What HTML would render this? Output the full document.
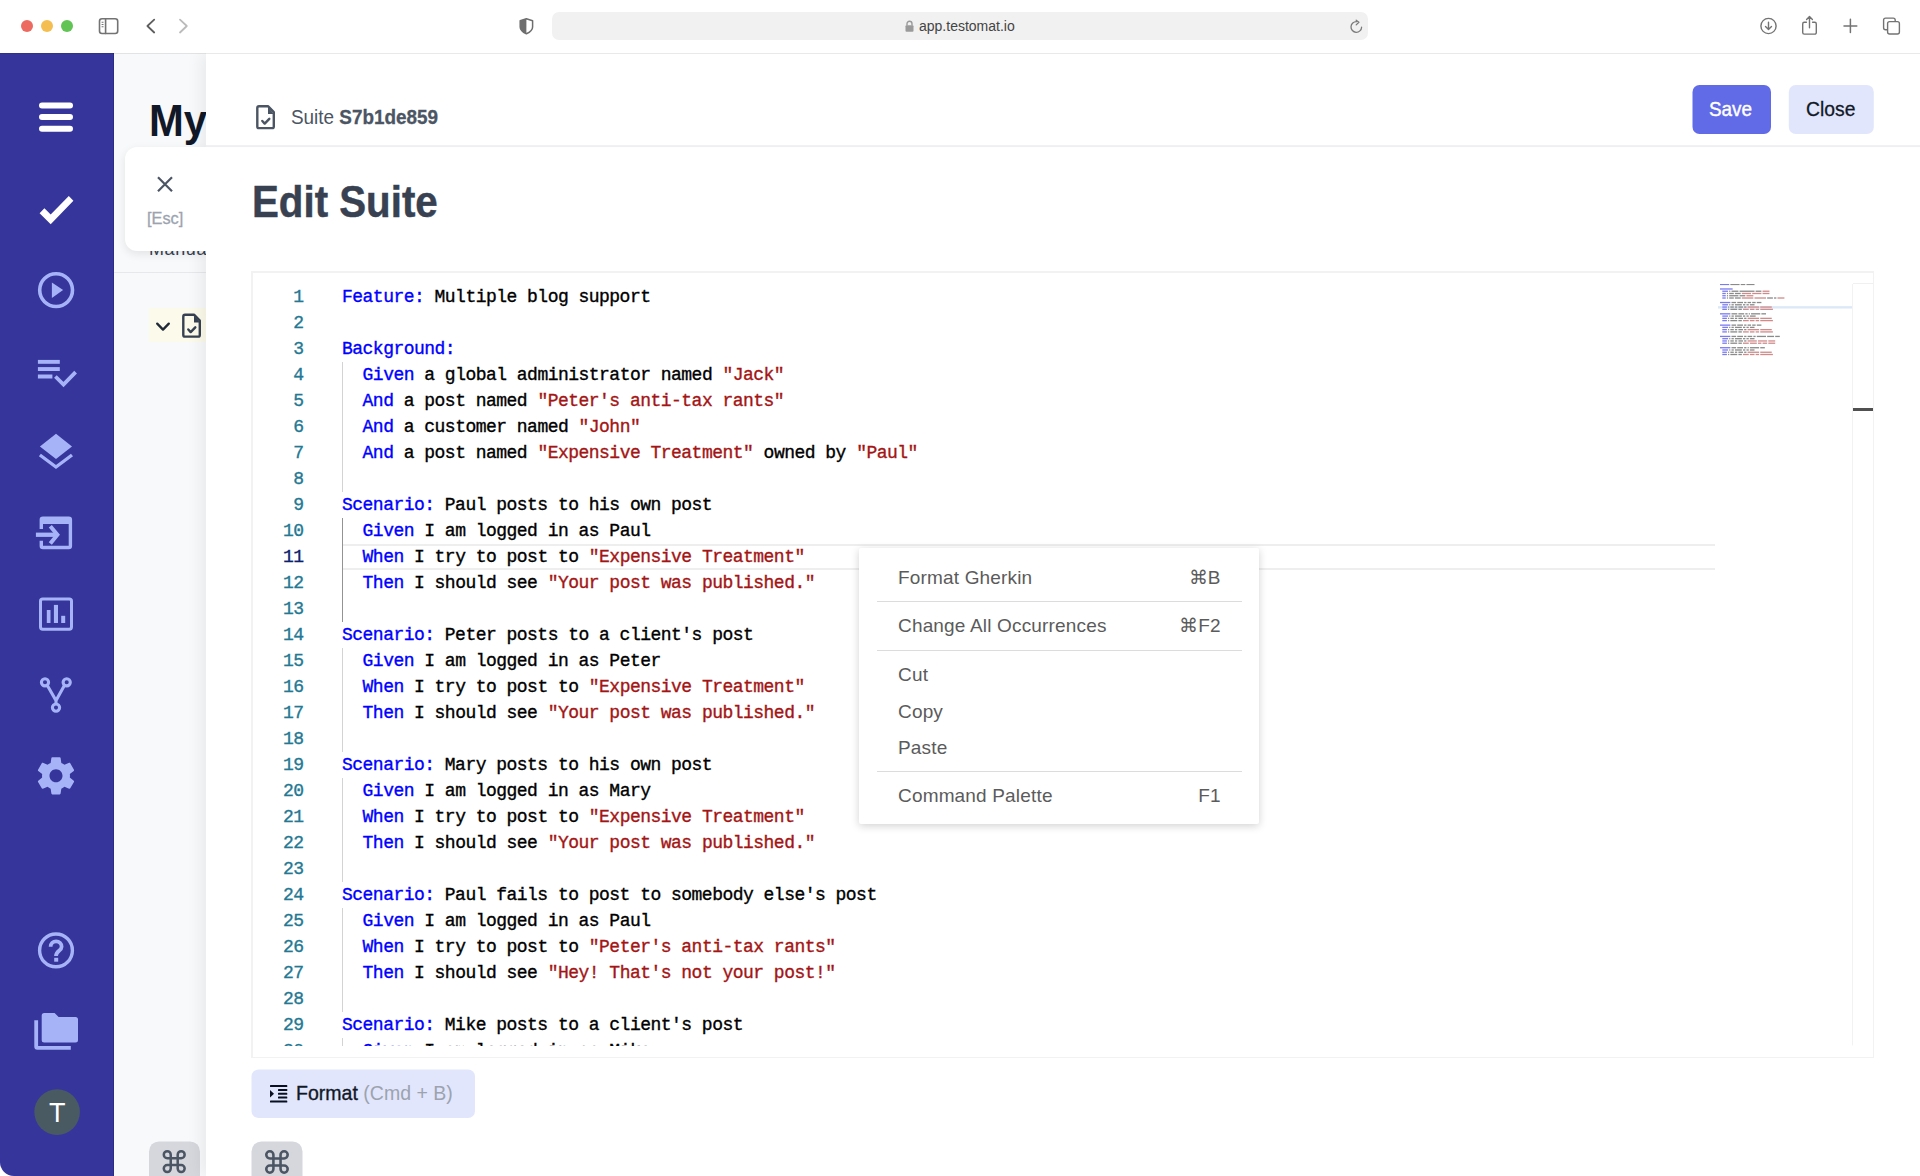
<!DOCTYPE html>
<html><head><meta charset="utf-8">
<style>
*{box-sizing:border-box;margin:0;padding:0}
html,body{width:1920px;height:1176px;overflow:hidden;background:#fff;font-family:"Liberation Sans",sans-serif}
.a{position:absolute}
svg{position:absolute;overflow:visible}
.t{position:absolute;white-space:pre;transform-origin:0 0}
/* browser toolbar */
#tb{position:absolute;z-index:5;left:0;top:0;width:1920px;height:54px;background:#fff;background-clip:padding-box;border-bottom:1px solid rgba(0,0,0,0.085)}
.dot{position:absolute;top:20px;width:12px;height:12px;border-radius:50%}
#url{position:absolute;left:552px;top:12px;width:816px;height:28px;background:#f1f1f1;border-radius:7px}
/* sidebar */
#sb{position:absolute;left:0;top:53px;width:114px;height:1123px;background:#35359b;border-bottom-left-radius:14px;box-shadow:inset -1px 0 rgba(0,0,40,0.18)}
#p2{position:absolute;left:114px;top:53px;width:92px;height:1123px;background:#f8f9fb;overflow:hidden}
#modal{position:absolute;left:206px;top:53px;width:1714px;height:1123px;background:#fff;box-shadow:-4px 0 16px rgba(0,0,0,0.07)}
.cl{position:absolute;left:342px;height:26px;line-height:26px;font-family:"Liberation Mono",monospace;font-size:18px;letter-spacing:-0.52px;color:#000;white-space:pre;-webkit-text-stroke:0.35px}
.ln{position:absolute;left:263px;width:40.5px;text-align:right;height:26px;line-height:26px;font-family:"Liberation Mono",monospace;font-size:18px;letter-spacing:-0.52px;color:#237893;white-space:pre;-webkit-text-stroke:0.35px}
.ln.act{color:#0b216f}
.k{color:#0000ff}.s{color:#a31515}
.mi{position:absolute;left:899px;font-size:19px;line-height:19px;color:#5b5b5b;white-space:pre;letter-spacing:0.17px}
.ms{position:absolute;right:38.5px;font-size:19px;line-height:19px;color:#5b5b5b;white-space:pre}
.sep{position:absolute;left:18px;width:365px;height:1px;background:#dcdcdc}
</style></head><body>

<div id="tb">
  <div class="dot" style="left:21px;background:#ec6a5f"></div>
  <div class="dot" style="left:41px;background:#f4bf50"></div>
  <div class="dot" style="left:61px;background:#61c454"></div>
  <!-- sidebar toggle -->
  <svg style="left:0;top:0" width="1920" height="53">
    <g fill="none" stroke="#737373" stroke-width="1.6" stroke-linecap="round" stroke-linejoin="round">
      <rect x="99.5" y="18.7" width="18.2" height="14.8" rx="2.5"/>
      <line x1="105.6" y1="18.7" x2="105.6" y2="33.5"/>
      <path d="M101.6 22.3H103.5M101.6 24.5H103.5M101.6 26.7H103.5" stroke-width="1.1" stroke-linecap="butt"/>
      <path d="M154.2 19.7L147.4 26L154.2 32.5" stroke="#5e5e5e" stroke-width="1.8"/>
      <path d="M180 19.7L186.8 26L180 32.5" stroke="#bbbbbb" stroke-width="1.8"/>
    </g>
    <!-- shield -->
    <path d="M526.4 18.8L520.2 20.7V27C520.2 30.4 523.5 32.5 526.4 33.8C529.3 32.5 532.6 30.4 532.6 27V20.7Z" fill="none" stroke="#6e6e6e" stroke-width="1.5" stroke-linejoin="round"/>
    <path d="M526.4 18.8L520.2 20.7V27C520.2 30.4 523.5 32.5 526.4 33.8Z" fill="#6e6e6e"/>
    <!-- download -->
    <g fill="none" stroke="#737373" stroke-width="1.4" stroke-linecap="round" stroke-linejoin="round">
      <circle cx="1768.5" cy="26" r="7.6"/>
      <path d="M1768.5 22.2V29.4M1765.5 26.5L1768.5 29.5L1771.5 26.5"/>
      <!-- share -->
      <path d="M1806.4 22.3H1804.3A1.6 1.6 0 0 0 1802.7 23.9V32.5A1.6 1.6 0 0 0 1804.3 34.1H1814.7A1.6 1.6 0 0 0 1816.3 32.5V23.9A1.6 1.6 0 0 0 1814.7 22.3H1812.6"/>
      <path d="M1809.5 27.8V16.6M1806.6 19.6L1809.5 16.6L1812.4 19.6"/>
      <!-- plus -->
      <path d="M1850.4 19.3V32.4M1844 25.9H1856.8" stroke-width="1.5"/>
      <!-- tabs -->
      <rect x="1883.6" y="18.1" width="11.6" height="11.7" rx="2" fill="#fff"/>
      <rect x="1887.6" y="21.6" width="11.8" height="12.4" rx="2" fill="#fff"/>
    </g>
  </svg>
  <div id="url">
    <svg style="left:0;top:0" width="816" height="28"><path d="M809.6 15.2A5.3 5.3 0 1 1 804.6 9.7" fill="none" stroke="#7a7a7a" stroke-width="1.3" stroke-linecap="round"/><path d="M804.2 8.2L806.9 10.3L804.2 12.9" fill="none" stroke="#7a7a7a" stroke-width="1.3" stroke-linecap="round" stroke-linejoin="round"/></svg>
    <svg style="left:353px;top:8px" width="9" height="12"><path d="M2 5.5V3.8A2.5 2.5 0 0 1 7 3.8V5.5" fill="none" stroke="#9a9a9a" stroke-width="1.4"/><rect x="0.5" y="5.2" width="8" height="6.6" rx="1" fill="#9a9a9a"/></svg>
    <div class="t" style="left:367px;top:7px;font-size:14px;line-height:14px;color:#444">app.testomat.io</div>
  </div>
</div>

<!-- SIDEBAR -->
<div id="sb">
  <svg style="left:0;top:-53px" width="114" height="1176">
    <g fill="#fff">
      <rect x="39" y="102.5" width="34" height="6" rx="3"/>
      <rect x="39" y="114" width="34" height="6" rx="3"/>
      <rect x="39" y="125.8" width="34" height="6" rx="3"/>
      <path d="M39.6 213.3L44.4 208.3L50.7 214.5L68.8 196L73.4 200.8L50.7 224.3Z"/>
    </g>
    <g fill="#a7b3f7">
      <circle cx="56.1" cy="290.1" r="16.4" fill="none" stroke="#a7b3f7" stroke-width="3.6"/>
      <path d="M51.9 282.4L51.9 297.9L63.1 290.1Z"/>
      <rect x="37.9" y="359.9" width="21.9" height="3.9"/>
      <rect x="37.9" y="367.1" width="21.9" height="3.9"/>
      <rect x="37.9" y="374.5" width="14.5" height="4"/>
      <path d="M55.4 376.5L63.5 384.5L75.6 372.1" fill="none" stroke="#a7b3f7" stroke-width="3.8"/>
      <path d="M56 433.8L72 446.4L56 458.9L39.9 446.4Z"/>
      <path d="M39.9 455L56 467L72 455" fill="none" stroke="#a7b3f7" stroke-width="3.4"/>
      <!-- input icon -->
      <path d="M39.6 529.1V519.8A3.3 3.3 0 0 1 42.9 516.5H68.8A3.3 3.3 0 0 1 72.1 519.8V545.9A3.3 3.3 0 0 1 68.8 549.2H42.9A3.3 3.3 0 0 1 39.6 545.9V540.8H43V545.8H68.7V524H43V529.1Z"/>
      <rect x="35.9" y="532.6" width="21" height="4.3"/>
      <path d="M50.3 526.2L57.4 534.8L50.3 543.5" fill="none" stroke="#a7b3f7" stroke-width="4"/>
      <!-- chart icon -->
      <rect x="40.5" y="598.9" width="31" height="30.3" rx="2.2" fill="none" stroke="#a7b3f7" stroke-width="3"/>
      <rect x="46.8" y="610" width="3.7" height="13"/>
      <rect x="53.9" y="604.9" width="4.1" height="18.1"/>
      <rect x="61.2" y="615.8" width="4" height="7.2"/>
      <!-- fork -->
      <g fill="none" stroke="#a7b3f7" stroke-width="3.1">
        <circle cx="45" cy="682.3" r="3.6"/>
        <circle cx="66.7" cy="682.3" r="3.6"/>
        <circle cx="56" cy="707.6" r="3.6"/>
        <path d="M47.5 685.8L56 700.5L64.2 685.8M56 700V704"/>
      </g>
      <!-- gear -->
      <path transform="translate(56,775.8) scale(1.86) translate(-12,-12)" fill-rule="evenodd" d="M19.43 12.98c.04-.32.07-.64.07-.98s-.03-.66-.07-.98l2.11-1.65c.19-.15.24-.42.12-.64l-2-3.46c-.12-.22-.39-.3-.61-.22l-2.49 1c-.52-.4-1.08-.73-1.690-.98l-.38-2.65C14.46 2.18 14.25 2 14 2h-4c-.25 0-.46.18-.49.42l-.38 2.65c-.61.25-1.17.59-1.69.98l-2.49-1c-.23-.09-.49 0-.61.22l-2 3.46c-.13.22-.07.49.12.64l2.11 1.65c-.04.32-.07.65-.07.98s.03.66.07.98l-2.11 1.65c-.19.15-.24.42-.12.64l2 3.46c.12.22.39.3.61.22l2.49-1c.52.4 1.08.73 1.69.98l.38 2.65c.03.24.24.42.49.42h4c.25 0 .46-.18.49-.42l.38-2.650c.61-.25 1.17-.59 1.69-.98l2.49 1c.23.09.49 0 .61-.22l2-3.46c.12-.22.07-.49-.12-.64l-2.11-1.65zM12 15.5c-1.93 0-3.5-1.57-3.5-3.5s1.57-3.5 3.5-3.5 3.5 1.57 3.5 3.5-1.57 3.5-3.5 3.5z"/>
      <!-- help -->
      <circle cx="56" cy="950.4" r="16.4" fill="none" stroke="#a7b3f7" stroke-width="3.4"/>
      <path d="M50.6 946.8A5.5 5.5 0 0 1 61.6 946.8C61.6 950.8 56 951 56 956" fill="none" stroke="#a7b3f7" stroke-width="3.8"/>
      <rect x="54.2" y="957.8" width="4" height="3.9"/>
      <!-- folders -->
      <path d="M44.2 1012.9H54.6L58.6 1017H75.5A2.5 2.5 0 0 1 78 1019.5V1040.1A2.5 2.5 0 0 1 75.5 1042.6H44.2A2.5 2.5 0 0 1 41.7 1040.1V1015.4A2.5 2.5 0 0 1 44.2 1012.9Z"/>
      <path d="M34.3 1020.2H38.1V1046H70.8V1049.8H37.3A3 3 0 0 1 34.3 1046.8Z"/>
    </g>
    <circle cx="57.1" cy="1112.1" r="22.8" fill="#4a5a62"/>
  </svg>
  <div class="t" style="left:49px;top:1047.4px;font-size:27px;line-height:27px;color:#fff">T</div>
</div>

<div id="p2">
  <div class="t" style="left:35px;top:45.8px;font-size:44px;line-height:44px;font-weight:700;color:#111827;transform:scaleX(0.95)">My</div>
  <div class="t" style="left:35px;top:186.5px;font-size:18px;line-height:18px;color:#374151;letter-spacing:0.6px">Manual tests</div>
  <div class="a" style="left:0;top:219px;width:92px;height:1px;background:#e6e8ec"></div>
  <div class="a" style="left:34.5px;top:254.7px;width:80px;height:34.5px;background:#fcfaea"></div>
  <svg style="left:-114px;top:-53px" width="206" height="1176">
    <path d="M157.2 323.6L163 329.6L168.8 323.6" fill="none" stroke="#1f2937" stroke-width="2.3" stroke-linecap="round" stroke-linejoin="round"/>
    <g transform="translate(-74,208.5)">
  <g stroke="#374151" stroke-width="2.4" fill="none" stroke-linejoin="round" stroke-linecap="round">
    <path d="M268.2 106.3H259A1.7 1.7 0 0 0 257.3 108V126.4A1.7 1.7 0 0 0 259 128.1H272.1A1.7 1.7 0 0 0 273.8 126.4V112.2Z"/>
    <path d="M262.3 121L264.7 123.6L269.3 118.8"/>
  </g>
  <path d="M268 107V113.9H273.9Z" fill="#374151"/>
</g>
  </svg>
  
  <svg style="left:-114px;top:-53px" width="206" height="1176">
    
    <rect x="149" y="1141.4" width="51" height="60" rx="10" fill="#d5d7dc"/>
    <path transform="translate(160.3,1147.7) scale(1.16)" d="M9 9V6A3 3 0 1 0 6 9H18A3 3 0 1 0 15 6V18A3 3 0 1 0 18 15H6A3 3 0 1 0 9 18Z" fill="none" stroke="#4b5563" stroke-width="2.15"/>
  </svg>
  
</div>

<div id="modal"></div>


<!-- esc card -->
<div class="a" style="left:125px;top:147px;width:81px;height:103.5px;background:#fff;border-radius:12px 0 0 12px;box-shadow:0 3px 10px rgba(0,0,0,0.09);clip-path:inset(-20px 0 -20px -20px)"></div>
<svg style="left:0;top:0" width="220" height="260"><path d="M158 177.3L172 191.3M172 177.3L158 191.3" stroke="#4b5563" stroke-width="2.2" stroke-linecap="butt"/></svg>
<div class="t" style="left:147px;top:209.5px;font-size:17px;line-height:17px;color:#9ca3af;transform:scaleX(0.96);-webkit-text-stroke:0.3px #9ca3af">[Esc]</div>

<!-- modal header -->
<svg style="left:0;top:0" width="1920" height="1176">
  <g stroke="#4b5563" stroke-width="2.4" fill="none" stroke-linejoin="round" stroke-linecap="round">
    <path d="M268.2 106.3H259A1.7 1.7 0 0 0 257.3 108V126.4A1.7 1.7 0 0 0 259 128.1H272.1A1.7 1.7 0 0 0 273.8 126.4V112.2Z"/>
    <path d="M262.3 121L264.7 123.6L269.3 118.8"/>
  </g>
  <path d="M268 107V113.9H273.9Z" fill="#4b5563"/>
  <rect x="206" y="145.2" width="1714" height="1.9" fill="#eeeef3"/>
  <rect x="1692.5" y="85" width="78.5" height="49" rx="7" fill="#616be8"/>
  <rect x="1788.8" y="85" width="85" height="49" rx="7" fill="#e1e6fc"/>
  <!-- format button -->
  <rect x="251.5" y="1069.5" width="223.5" height="48.5" rx="7" fill="#e1e6fc"/>
  <g fill="#0b1020">
    <rect x="270" y="1085.1" width="17.3" height="2" rx="0.6"/>
    <rect x="278" y="1089" width="9.3" height="2" rx="0.6"/>
    <rect x="278" y="1092.8" width="9.3" height="2" rx="0.6"/>
    <rect x="278" y="1096.6" width="9.3" height="2" rx="0.6"/>
    <rect x="270" y="1100.6" width="17.3" height="2" rx="0.6"/>
    <path d="M270 1090L270 1097.4L274 1093.7Z"/>
  </g>
  <rect x="251.5" y="1141.4" width="51" height="60" rx="10" fill="#d5d7dc"/>
  <path transform="translate(262.7,1147.7) scale(1.19)" d="M9 9V6A3 3 0 1 0 6 9H18A3 3 0 1 0 15 6V18A3 3 0 1 0 18 15H6A3 3 0 1 0 9 18Z" fill="none" stroke="#4b5563" stroke-width="2.15"/>
</svg>
<div class="t" style="left:291px;top:105.7px;font-size:21px;line-height:21px;color:#4b5563;transform:scaleX(0.9)">Suite <b style="-webkit-text-stroke:0.3px #4b5563">S7b1de859</b></div>
<div class="t" style="left:1709px;top:97.9px;font-size:21px;line-height:21px;color:#fff;transform:scaleX(0.9);-webkit-text-stroke:0.4px #fff">Save</div>
<div class="t" style="left:1806px;top:97.9px;font-size:21px;line-height:21px;color:#111827;transform:scaleX(0.92);-webkit-text-stroke:0.3px #111827">Close</div>
<div class="t" style="left:251.5px;top:178.6px;font-size:45px;line-height:45px;font-weight:700;color:#374151;transform:scaleX(0.895);-webkit-text-stroke:0.5px #374151">Edit Suite</div>
<div class="t" style="left:296px;top:1082.1px;font-size:21px;line-height:21px;color:#111827;transform:scaleX(0.93)"><span style="-webkit-text-stroke:0.35px #111827">Format</span> <span style="color:#9ca3af">(Cmd + B)</span></div>

<!-- editor -->
<div class="a" style="left:251px;top:270.5px;width:1623px;height:787.5px;border:2px solid #f2f2f2;border-right-width:1.5px;border-bottom-width:1.5px"></div>

<div class="a" style="left:252px;top:283.5px;width:1601px;height:762px;overflow:hidden">
 <div class="a" style="left:-252px;top:-283.5px;width:1920px;height:1176px">
  <div class="a" style="left:342px;top:543.5px;width:1373px;height:26px;border-top:2px solid #eeeeee;border-bottom:2px solid #eeeeee"></div>
  <div class="a" style="left:342px;top:361.5px;width:1px;height:130px;background:#d3d3d3"></div><div class="a" style="left:342px;top:517.5px;width:1px;height:104px;background:#939393"></div><div class="a" style="left:342px;top:647.5px;width:1px;height:104px;background:#d3d3d3"></div><div class="a" style="left:342px;top:777.5px;width:1px;height:104px;background:#d3d3d3"></div><div class="a" style="left:342px;top:907.5px;width:1px;height:104px;background:#d3d3d3"></div><div class="a" style="left:342px;top:1037.5px;width:1px;height:52px;background:#d3d3d3"></div>
  <div class="cl" style="top:284.1px"><span class="k">Feature:</span> Multiple blog support</div>
<div class="ln" style="top:284.1px">1</div>
<div class="cl" style="top:310.1px"></div>
<div class="ln" style="top:310.1px">2</div>
<div class="cl" style="top:336.1px"><span class="k">Background:</span></div>
<div class="ln" style="top:336.1px">3</div>
<div class="cl" style="top:362.1px">  <span class="k">Given</span> a global administrator named <span class="s">&quot;Jack&quot;</span></div>
<div class="ln" style="top:362.1px">4</div>
<div class="cl" style="top:388.1px">  <span class="k">And</span> a post named <span class="s">&quot;Peter&#x27;s anti-tax rants&quot;</span></div>
<div class="ln" style="top:388.1px">5</div>
<div class="cl" style="top:414.1px">  <span class="k">And</span> a customer named <span class="s">&quot;John&quot;</span></div>
<div class="ln" style="top:414.1px">6</div>
<div class="cl" style="top:440.1px">  <span class="k">And</span> a post named <span class="s">&quot;Expensive Treatment&quot;</span> owned by <span class="s">&quot;Paul&quot;</span></div>
<div class="ln" style="top:440.1px">7</div>
<div class="cl" style="top:466.1px"></div>
<div class="ln" style="top:466.1px">8</div>
<div class="cl" style="top:492.1px"><span class="k">Scenario:</span> Paul posts to his own post</div>
<div class="ln" style="top:492.1px">9</div>
<div class="cl" style="top:518.1px">  <span class="k">Given</span> I am logged in as Paul</div>
<div class="ln" style="top:518.1px">10</div>
<div class="cl" style="top:544.1px">  <span class="k">When</span> I try to post to <span class="s">&quot;Expensive Treatment&quot;</span></div>
<div class="ln act" style="top:544.1px">11</div>
<div class="cl" style="top:570.1px">  <span class="k">Then</span> I should see <span class="s">&quot;Your post was published.&quot;</span></div>
<div class="ln" style="top:570.1px">12</div>
<div class="cl" style="top:596.1px"></div>
<div class="ln" style="top:596.1px">13</div>
<div class="cl" style="top:622.1px"><span class="k">Scenario:</span> Peter posts to a client&#x27;s post</div>
<div class="ln" style="top:622.1px">14</div>
<div class="cl" style="top:648.1px">  <span class="k">Given</span> I am logged in as Peter</div>
<div class="ln" style="top:648.1px">15</div>
<div class="cl" style="top:674.1px">  <span class="k">When</span> I try to post to <span class="s">&quot;Expensive Treatment&quot;</span></div>
<div class="ln" style="top:674.1px">16</div>
<div class="cl" style="top:700.1px">  <span class="k">Then</span> I should see <span class="s">&quot;Your post was published.&quot;</span></div>
<div class="ln" style="top:700.1px">17</div>
<div class="cl" style="top:726.1px"></div>
<div class="ln" style="top:726.1px">18</div>
<div class="cl" style="top:752.1px"><span class="k">Scenario:</span> Mary posts to his own post</div>
<div class="ln" style="top:752.1px">19</div>
<div class="cl" style="top:778.1px">  <span class="k">Given</span> I am logged in as Mary</div>
<div class="ln" style="top:778.1px">20</div>
<div class="cl" style="top:804.1px">  <span class="k">When</span> I try to post to <span class="s">&quot;Expensive Treatment&quot;</span></div>
<div class="ln" style="top:804.1px">21</div>
<div class="cl" style="top:830.1px">  <span class="k">Then</span> I should see <span class="s">&quot;Your post was published.&quot;</span></div>
<div class="ln" style="top:830.1px">22</div>
<div class="cl" style="top:856.1px"></div>
<div class="ln" style="top:856.1px">23</div>
<div class="cl" style="top:882.1px"><span class="k">Scenario:</span> Paul fails to post to somebody else&#x27;s post</div>
<div class="ln" style="top:882.1px">24</div>
<div class="cl" style="top:908.1px">  <span class="k">Given</span> I am logged in as Paul</div>
<div class="ln" style="top:908.1px">25</div>
<div class="cl" style="top:934.1px">  <span class="k">When</span> I try to post to <span class="s">&quot;Peter&#x27;s anti-tax rants&quot;</span></div>
<div class="ln" style="top:934.1px">26</div>
<div class="cl" style="top:960.1px">  <span class="k">Then</span> I should see <span class="s">&quot;Hey! That&#x27;s not your post!&quot;</span></div>
<div class="ln" style="top:960.1px">27</div>
<div class="cl" style="top:986.1px"></div>
<div class="ln" style="top:986.1px">28</div>
<div class="cl" style="top:1012.1px"><span class="k">Scenario:</span> Mike posts to a client&#x27;s post</div>
<div class="ln" style="top:1012.1px">29</div>
<div class="cl" style="top:1038.1px">  <span class="k">Given</span> I am logged in as Mike</div>
<div class="ln" style="top:1038.1px">30</div>
  <svg style="left:0;top:0" width="1920" height="1176">
   <rect x="1718" y="306.2" width="134" height="2.3" fill="#dbe8f7"/>
   <rect x="1720.00" y="283.80" width="9.20" height="1.3" fill="#7b7bf0"/>
<rect x="1730.35" y="283.80" width="9.20" height="1.3" fill="#8a8a8a"/>
<rect x="1740.70" y="283.80" width="4.60" height="1.3" fill="#8a8a8a"/>
<rect x="1746.45" y="283.80" width="8.05" height="1.3" fill="#8a8a8a"/>
<rect x="1720.00" y="288.32" width="12.65" height="1.3" fill="#7b7bf0"/>
<rect x="1722.30" y="290.58" width="5.75" height="1.3" fill="#7b7bf0"/>
<rect x="1729.20" y="290.58" width="1.15" height="1.3" fill="#8a8a8a"/>
<rect x="1731.50" y="290.58" width="6.90" height="1.3" fill="#8a8a8a"/>
<rect x="1739.55" y="290.58" width="14.95" height="1.3" fill="#8a8a8a"/>
<rect x="1755.65" y="290.58" width="5.75" height="1.3" fill="#8a8a8a"/>
<rect x="1762.55" y="290.58" width="6.90" height="1.3" fill="#d08a8a"/>
<rect x="1722.30" y="292.84" width="3.45" height="1.3" fill="#7b7bf0"/>
<rect x="1726.90" y="292.84" width="1.15" height="1.3" fill="#8a8a8a"/>
<rect x="1729.20" y="292.84" width="4.60" height="1.3" fill="#8a8a8a"/>
<rect x="1734.95" y="292.84" width="5.75" height="1.3" fill="#8a8a8a"/>
<rect x="1741.85" y="292.84" width="9.20" height="1.3" fill="#d08a8a"/>
<rect x="1752.20" y="292.84" width="9.20" height="1.3" fill="#d08a8a"/>
<rect x="1762.55" y="292.84" width="6.90" height="1.3" fill="#d08a8a"/>
<rect x="1722.30" y="295.10" width="3.45" height="1.3" fill="#7b7bf0"/>
<rect x="1726.90" y="295.10" width="1.15" height="1.3" fill="#8a8a8a"/>
<rect x="1729.20" y="295.10" width="9.20" height="1.3" fill="#8a8a8a"/>
<rect x="1739.55" y="295.10" width="5.75" height="1.3" fill="#8a8a8a"/>
<rect x="1746.45" y="295.10" width="6.90" height="1.3" fill="#d08a8a"/>
<rect x="1722.30" y="297.36" width="3.45" height="1.3" fill="#7b7bf0"/>
<rect x="1726.90" y="297.36" width="1.15" height="1.3" fill="#8a8a8a"/>
<rect x="1729.20" y="297.36" width="4.60" height="1.3" fill="#8a8a8a"/>
<rect x="1734.95" y="297.36" width="5.75" height="1.3" fill="#8a8a8a"/>
<rect x="1741.85" y="297.36" width="11.50" height="1.3" fill="#d08a8a"/>
<rect x="1754.50" y="297.36" width="11.50" height="1.3" fill="#d08a8a"/>
<rect x="1767.15" y="297.36" width="5.75" height="1.3" fill="#8a8a8a"/>
<rect x="1774.05" y="297.36" width="2.30" height="1.3" fill="#8a8a8a"/>
<rect x="1777.50" y="297.36" width="6.90" height="1.3" fill="#d08a8a"/>
<rect x="1720.00" y="301.88" width="10.35" height="1.3" fill="#7b7bf0"/>
<rect x="1731.50" y="301.88" width="4.60" height="1.3" fill="#8a8a8a"/>
<rect x="1737.25" y="301.88" width="5.75" height="1.3" fill="#8a8a8a"/>
<rect x="1744.15" y="301.88" width="2.30" height="1.3" fill="#8a8a8a"/>
<rect x="1747.60" y="301.88" width="3.45" height="1.3" fill="#8a8a8a"/>
<rect x="1752.20" y="301.88" width="3.45" height="1.3" fill="#8a8a8a"/>
<rect x="1756.80" y="301.88" width="4.60" height="1.3" fill="#8a8a8a"/>
<rect x="1722.30" y="304.14" width="5.75" height="1.3" fill="#7b7bf0"/>
<rect x="1729.20" y="304.14" width="1.15" height="1.3" fill="#8a8a8a"/>
<rect x="1731.50" y="304.14" width="2.30" height="1.3" fill="#8a8a8a"/>
<rect x="1734.95" y="304.14" width="6.90" height="1.3" fill="#8a8a8a"/>
<rect x="1743.00" y="304.14" width="2.30" height="1.3" fill="#8a8a8a"/>
<rect x="1746.45" y="304.14" width="2.30" height="1.3" fill="#8a8a8a"/>
<rect x="1749.90" y="304.14" width="4.60" height="1.3" fill="#8a8a8a"/>
<rect x="1722.30" y="306.40" width="4.60" height="1.3" fill="#7b7bf0"/>
<rect x="1728.05" y="306.40" width="1.15" height="1.3" fill="#8a8a8a"/>
<rect x="1730.35" y="306.40" width="3.45" height="1.3" fill="#8a8a8a"/>
<rect x="1734.95" y="306.40" width="2.30" height="1.3" fill="#8a8a8a"/>
<rect x="1738.40" y="306.40" width="4.60" height="1.3" fill="#8a8a8a"/>
<rect x="1744.15" y="306.40" width="2.30" height="1.3" fill="#8a8a8a"/>
<rect x="1747.60" y="306.40" width="11.50" height="1.3" fill="#d08a8a"/>
<rect x="1760.25" y="306.40" width="11.50" height="1.3" fill="#d08a8a"/>
<rect x="1722.30" y="308.66" width="4.60" height="1.3" fill="#7b7bf0"/>
<rect x="1728.05" y="308.66" width="1.15" height="1.3" fill="#8a8a8a"/>
<rect x="1730.35" y="308.66" width="6.90" height="1.3" fill="#8a8a8a"/>
<rect x="1738.40" y="308.66" width="3.45" height="1.3" fill="#8a8a8a"/>
<rect x="1743.00" y="308.66" width="5.75" height="1.3" fill="#d08a8a"/>
<rect x="1749.90" y="308.66" width="4.60" height="1.3" fill="#d08a8a"/>
<rect x="1755.65" y="308.66" width="3.45" height="1.3" fill="#d08a8a"/>
<rect x="1760.25" y="308.66" width="12.65" height="1.3" fill="#d08a8a"/>
<rect x="1720.00" y="313.18" width="10.35" height="1.3" fill="#7b7bf0"/>
<rect x="1731.50" y="313.18" width="5.75" height="1.3" fill="#8a8a8a"/>
<rect x="1738.40" y="313.18" width="5.75" height="1.3" fill="#8a8a8a"/>
<rect x="1745.30" y="313.18" width="2.30" height="1.3" fill="#8a8a8a"/>
<rect x="1748.75" y="313.18" width="1.15" height="1.3" fill="#8a8a8a"/>
<rect x="1751.05" y="313.18" width="9.20" height="1.3" fill="#8a8a8a"/>
<rect x="1761.40" y="313.18" width="4.60" height="1.3" fill="#8a8a8a"/>
<rect x="1722.30" y="315.44" width="5.75" height="1.3" fill="#7b7bf0"/>
<rect x="1729.20" y="315.44" width="1.15" height="1.3" fill="#8a8a8a"/>
<rect x="1731.50" y="315.44" width="2.30" height="1.3" fill="#8a8a8a"/>
<rect x="1734.95" y="315.44" width="6.90" height="1.3" fill="#8a8a8a"/>
<rect x="1743.00" y="315.44" width="2.30" height="1.3" fill="#8a8a8a"/>
<rect x="1746.45" y="315.44" width="2.30" height="1.3" fill="#8a8a8a"/>
<rect x="1749.90" y="315.44" width="5.75" height="1.3" fill="#8a8a8a"/>
<rect x="1722.30" y="317.70" width="4.60" height="1.3" fill="#7b7bf0"/>
<rect x="1728.05" y="317.70" width="1.15" height="1.3" fill="#8a8a8a"/>
<rect x="1730.35" y="317.70" width="3.45" height="1.3" fill="#8a8a8a"/>
<rect x="1734.95" y="317.70" width="2.30" height="1.3" fill="#8a8a8a"/>
<rect x="1738.40" y="317.70" width="4.60" height="1.3" fill="#8a8a8a"/>
<rect x="1744.15" y="317.70" width="2.30" height="1.3" fill="#8a8a8a"/>
<rect x="1747.60" y="317.70" width="11.50" height="1.3" fill="#d08a8a"/>
<rect x="1760.25" y="317.70" width="11.50" height="1.3" fill="#d08a8a"/>
<rect x="1722.30" y="319.96" width="4.60" height="1.3" fill="#7b7bf0"/>
<rect x="1728.05" y="319.96" width="1.15" height="1.3" fill="#8a8a8a"/>
<rect x="1730.35" y="319.96" width="6.90" height="1.3" fill="#8a8a8a"/>
<rect x="1738.40" y="319.96" width="3.45" height="1.3" fill="#8a8a8a"/>
<rect x="1743.00" y="319.96" width="5.75" height="1.3" fill="#d08a8a"/>
<rect x="1749.90" y="319.96" width="4.60" height="1.3" fill="#d08a8a"/>
<rect x="1755.65" y="319.96" width="3.45" height="1.3" fill="#d08a8a"/>
<rect x="1760.25" y="319.96" width="12.65" height="1.3" fill="#d08a8a"/>
<rect x="1720.00" y="324.48" width="10.35" height="1.3" fill="#7b7bf0"/>
<rect x="1731.50" y="324.48" width="4.60" height="1.3" fill="#8a8a8a"/>
<rect x="1737.25" y="324.48" width="5.75" height="1.3" fill="#8a8a8a"/>
<rect x="1744.15" y="324.48" width="2.30" height="1.3" fill="#8a8a8a"/>
<rect x="1747.60" y="324.48" width="3.45" height="1.3" fill="#8a8a8a"/>
<rect x="1752.20" y="324.48" width="3.45" height="1.3" fill="#8a8a8a"/>
<rect x="1756.80" y="324.48" width="4.60" height="1.3" fill="#8a8a8a"/>
<rect x="1722.30" y="326.74" width="5.75" height="1.3" fill="#7b7bf0"/>
<rect x="1729.20" y="326.74" width="1.15" height="1.3" fill="#8a8a8a"/>
<rect x="1731.50" y="326.74" width="2.30" height="1.3" fill="#8a8a8a"/>
<rect x="1734.95" y="326.74" width="6.90" height="1.3" fill="#8a8a8a"/>
<rect x="1743.00" y="326.74" width="2.30" height="1.3" fill="#8a8a8a"/>
<rect x="1746.45" y="326.74" width="2.30" height="1.3" fill="#8a8a8a"/>
<rect x="1749.90" y="326.74" width="4.60" height="1.3" fill="#8a8a8a"/>
<rect x="1722.30" y="329.00" width="4.60" height="1.3" fill="#7b7bf0"/>
<rect x="1728.05" y="329.00" width="1.15" height="1.3" fill="#8a8a8a"/>
<rect x="1730.35" y="329.00" width="3.45" height="1.3" fill="#8a8a8a"/>
<rect x="1734.95" y="329.00" width="2.30" height="1.3" fill="#8a8a8a"/>
<rect x="1738.40" y="329.00" width="4.60" height="1.3" fill="#8a8a8a"/>
<rect x="1744.15" y="329.00" width="2.30" height="1.3" fill="#8a8a8a"/>
<rect x="1747.60" y="329.00" width="11.50" height="1.3" fill="#d08a8a"/>
<rect x="1760.25" y="329.00" width="11.50" height="1.3" fill="#d08a8a"/>
<rect x="1722.30" y="331.26" width="4.60" height="1.3" fill="#7b7bf0"/>
<rect x="1728.05" y="331.26" width="1.15" height="1.3" fill="#8a8a8a"/>
<rect x="1730.35" y="331.26" width="6.90" height="1.3" fill="#8a8a8a"/>
<rect x="1738.40" y="331.26" width="3.45" height="1.3" fill="#8a8a8a"/>
<rect x="1743.00" y="331.26" width="5.75" height="1.3" fill="#d08a8a"/>
<rect x="1749.90" y="331.26" width="4.60" height="1.3" fill="#d08a8a"/>
<rect x="1755.65" y="331.26" width="3.45" height="1.3" fill="#d08a8a"/>
<rect x="1760.25" y="331.26" width="12.65" height="1.3" fill="#d08a8a"/>
<rect x="1720.00" y="335.78" width="10.35" height="1.3" fill="#7b7bf0"/>
<rect x="1731.50" y="335.78" width="4.60" height="1.3" fill="#8a8a8a"/>
<rect x="1737.25" y="335.78" width="5.75" height="1.3" fill="#8a8a8a"/>
<rect x="1744.15" y="335.78" width="2.30" height="1.3" fill="#8a8a8a"/>
<rect x="1747.60" y="335.78" width="4.60" height="1.3" fill="#8a8a8a"/>
<rect x="1753.35" y="335.78" width="2.30" height="1.3" fill="#8a8a8a"/>
<rect x="1756.80" y="335.78" width="9.20" height="1.3" fill="#8a8a8a"/>
<rect x="1767.15" y="335.78" width="6.90" height="1.3" fill="#8a8a8a"/>
<rect x="1775.20" y="335.78" width="4.60" height="1.3" fill="#8a8a8a"/>
<rect x="1722.30" y="338.04" width="5.75" height="1.3" fill="#7b7bf0"/>
<rect x="1729.20" y="338.04" width="1.15" height="1.3" fill="#8a8a8a"/>
<rect x="1731.50" y="338.04" width="2.30" height="1.3" fill="#8a8a8a"/>
<rect x="1734.95" y="338.04" width="6.90" height="1.3" fill="#8a8a8a"/>
<rect x="1743.00" y="338.04" width="2.30" height="1.3" fill="#8a8a8a"/>
<rect x="1746.45" y="338.04" width="2.30" height="1.3" fill="#8a8a8a"/>
<rect x="1749.90" y="338.04" width="4.60" height="1.3" fill="#8a8a8a"/>
<rect x="1722.30" y="340.30" width="4.60" height="1.3" fill="#7b7bf0"/>
<rect x="1728.05" y="340.30" width="1.15" height="1.3" fill="#8a8a8a"/>
<rect x="1730.35" y="340.30" width="3.45" height="1.3" fill="#8a8a8a"/>
<rect x="1734.95" y="340.30" width="2.30" height="1.3" fill="#8a8a8a"/>
<rect x="1738.40" y="340.30" width="4.60" height="1.3" fill="#8a8a8a"/>
<rect x="1744.15" y="340.30" width="2.30" height="1.3" fill="#8a8a8a"/>
<rect x="1747.60" y="340.30" width="9.20" height="1.3" fill="#d08a8a"/>
<rect x="1757.95" y="340.30" width="9.20" height="1.3" fill="#d08a8a"/>
<rect x="1768.30" y="340.30" width="6.90" height="1.3" fill="#d08a8a"/>
<rect x="1722.30" y="342.56" width="4.60" height="1.3" fill="#7b7bf0"/>
<rect x="1728.05" y="342.56" width="1.15" height="1.3" fill="#8a8a8a"/>
<rect x="1730.35" y="342.56" width="6.90" height="1.3" fill="#8a8a8a"/>
<rect x="1738.40" y="342.56" width="3.45" height="1.3" fill="#8a8a8a"/>
<rect x="1743.00" y="342.56" width="5.75" height="1.3" fill="#d08a8a"/>
<rect x="1749.90" y="342.56" width="6.90" height="1.3" fill="#d08a8a"/>
<rect x="1757.95" y="342.56" width="3.45" height="1.3" fill="#d08a8a"/>
<rect x="1762.55" y="342.56" width="4.60" height="1.3" fill="#d08a8a"/>
<rect x="1768.30" y="342.56" width="6.90" height="1.3" fill="#d08a8a"/>
<rect x="1720.00" y="347.08" width="10.35" height="1.3" fill="#7b7bf0"/>
<rect x="1731.50" y="347.08" width="4.60" height="1.3" fill="#8a8a8a"/>
<rect x="1737.25" y="347.08" width="5.75" height="1.3" fill="#8a8a8a"/>
<rect x="1744.15" y="347.08" width="2.30" height="1.3" fill="#8a8a8a"/>
<rect x="1747.60" y="347.08" width="1.15" height="1.3" fill="#8a8a8a"/>
<rect x="1749.90" y="347.08" width="9.20" height="1.3" fill="#8a8a8a"/>
<rect x="1760.25" y="347.08" width="4.60" height="1.3" fill="#8a8a8a"/>
<rect x="1722.30" y="349.34" width="5.75" height="1.3" fill="#7b7bf0"/>
<rect x="1729.20" y="349.34" width="1.15" height="1.3" fill="#8a8a8a"/>
<rect x="1731.50" y="349.34" width="2.30" height="1.3" fill="#8a8a8a"/>
<rect x="1734.95" y="349.34" width="6.90" height="1.3" fill="#8a8a8a"/>
<rect x="1743.00" y="349.34" width="2.30" height="1.3" fill="#8a8a8a"/>
<rect x="1746.45" y="349.34" width="2.30" height="1.3" fill="#8a8a8a"/>
<rect x="1749.90" y="349.34" width="4.60" height="1.3" fill="#8a8a8a"/>
<rect x="1722.30" y="351.60" width="4.60" height="1.3" fill="#7b7bf0"/>
<rect x="1728.05" y="351.60" width="1.15" height="1.3" fill="#8a8a8a"/>
<rect x="1730.35" y="351.60" width="3.45" height="1.3" fill="#8a8a8a"/>
<rect x="1734.95" y="351.60" width="2.30" height="1.3" fill="#8a8a8a"/>
<rect x="1738.40" y="351.60" width="4.60" height="1.3" fill="#8a8a8a"/>
<rect x="1744.15" y="351.60" width="2.30" height="1.3" fill="#8a8a8a"/>
<rect x="1747.60" y="351.60" width="11.50" height="1.3" fill="#d08a8a"/>
<rect x="1760.25" y="351.60" width="11.50" height="1.3" fill="#d08a8a"/>
<rect x="1722.30" y="353.86" width="4.60" height="1.3" fill="#7b7bf0"/>
<rect x="1728.05" y="353.86" width="1.15" height="1.3" fill="#8a8a8a"/>
<rect x="1730.35" y="353.86" width="6.90" height="1.3" fill="#8a8a8a"/>
<rect x="1738.40" y="353.86" width="3.45" height="1.3" fill="#8a8a8a"/>
<rect x="1743.00" y="353.86" width="5.75" height="1.3" fill="#d08a8a"/>
<rect x="1749.90" y="353.86" width="4.60" height="1.3" fill="#d08a8a"/>
<rect x="1755.65" y="353.86" width="3.45" height="1.3" fill="#d08a8a"/>
<rect x="1760.25" y="353.86" width="12.65" height="1.3" fill="#d08a8a"/>
   <rect x="1852.2" y="283.5" width="1.8" height="762" fill="#efefef"/>
   
  </svg>
 </div>
</div>

<div class="a" style="left:1853px;top:408px;width:20px;height:3px;background:#505050"></div>
<div class="a" style="left:1853px;top:283px;width:20px;height:1px;background:#f0f0f0"></div>
<!-- context menu -->
<div class="a" style="left:859px;top:548px;width:400px;height:276px;background:#fff;border-radius:2px;box-shadow:0 2px 8px rgba(0,0,0,0.18)">
  <div class="t mi" style="left:39px;top:19.9px">Format Gherkin</div><div class="t ms" style="top:19.9px">⌘B</div>
  <div class="sep" style="top:53.0px"></div>
  <div class="t mi" style="left:39px;top:68.2px">Change All Occurrences</div><div class="t ms" style="top:68.2px">⌘F2</div>
  <div class="sep" style="top:102.0px"></div>
  <div class="t mi" style="left:39px;top:116.9px">Cut</div>
  <div class="t mi" style="left:39px;top:154.4px">Copy</div>
  <div class="t mi" style="left:39px;top:189.9px">Paste</div>
  <div class="sep" style="top:223.0px"></div>
  <div class="t mi" style="left:39px;top:237.9px">Command Palette</div><div class="t ms" style="top:237.9px">F1</div>
</div>

</body></html>
